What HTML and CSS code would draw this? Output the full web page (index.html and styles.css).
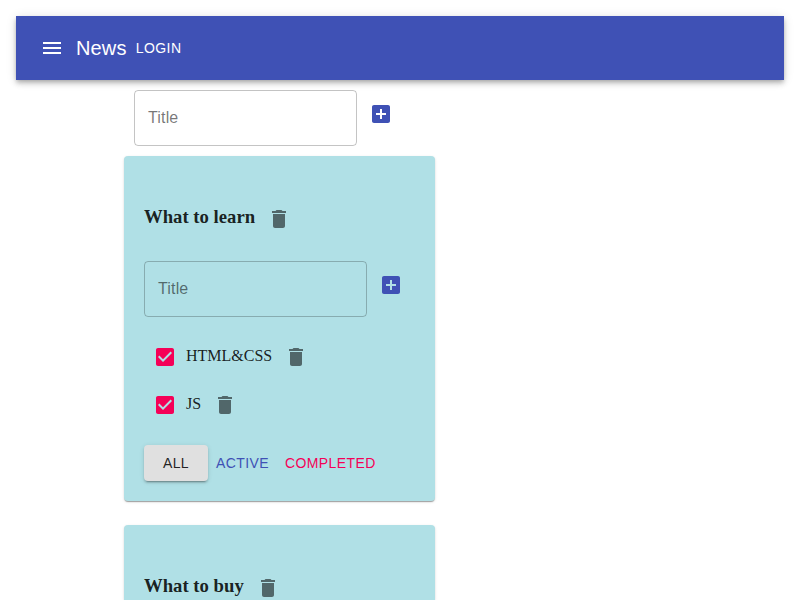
FILE: index.html
```html
<!DOCTYPE html>
<html lang="en">
<head>
<meta charset="utf-8">
<title>Todolists</title>
<link rel="stylesheet" href="styles.css">
</head>
<body>
<svg width="0" height="0" class="defs">
  <symbol id="menu" viewBox="0 0 24 24"><path d="M3 18h18v-2H3v2zm0-5h18v-2H3v2zm0-7v2h18V6H3z"/></symbol>
  <symbol id="add" viewBox="0 0 24 24"><path d="M19 3H5c-1.11 0-2 .9-2 2v14c0 1.1.89 2 2 2h14c1.1 0 2-.9 2-2V5c0-1.100-.9-2-2-2zm-2 10h-4v4h-2v-4H7v-2h4V7h2v4h4v2z"/></symbol>
  <symbol id="delete" viewBox="0 0 24 24"><path d="M6 19c0 1.100.9 2 2 2h8c1.100 0 2-.9 2-2V7H6v12zM19 4h-3.500l-1-1h-5l-1 1H5v2h14V4z"/></symbol>
  <symbol id="checked" viewBox="0 0 24 24"><path d="M19 3H5c-1.110 0-2 .9-2 2v14c0 1.100.89 2 2 2h14c1.110 0 2-.9 2-2V5c0-1.100-.89-2-2-2zm-9 14l-5-5 1.410-1.410L10 14.170l7.590-7.590L19 8l-9 9z"/></symbol>
</svg>
<header class="appbar">
  <a class="icon-button menu"><svg><use href="#menu"/></svg></a>
  <div class="brand">News</div>
  <a class="button">Login</a>
</header>
<main class="container">
  <div class="add-form new-list">
    <div class="field">Title</div>
    <a class="icon-button primary"><svg><use href="#add"/></svg></a>
  </div>
  <section class="card">
    <h3 class="heading"><span>What to learn</span><a class="icon-button"><svg><use href="#delete"/></svg></a></h3>
    <div class="add-form">
      <div class="field">Title</div>
      <a class="icon-button primary"><svg><use href="#add"/></svg></a>
    </div>
    <div class="tasks">
      <div class="task"><a class="checkbox"><svg><use href="#checked"/></svg></a><span>HTML&amp;CSS</span><a class="icon-button"><svg><use href="#delete"/></svg></a></div>
      <div class="task"><a class="checkbox"><svg><use href="#checked"/></svg></a><span>JS</span><a class="icon-button"><svg><use href="#delete"/></svg></a></div>
    </div>
    <div class="filters">
      <a class="button contained">All</a>
      <a class="button primary">Active</a>
      <a class="button secondary">Completed</a>
    </div>
  </section>
  <section class="card last">
    <h3 class="heading"><span>What to buy</span><a class="icon-button"><svg><use href="#delete"/></svg></a></h3>
  </section>
</main>
</body>
</html>
```
FILE: styles.css
```css
* { box-sizing: border-box; }
body {
  height: 600px;
  margin: 0;
  padding: 16px 16px 0;
  overflow: hidden;
  background: #fff;
  color: #000;
  font-family: "Liberation Serif", "Times New Roman", serif;
  font-size: 16px;
}
.defs { display: none; }
svg { display: block; width: 24px; height: 24px; fill: currentColor; }
.appbar {
  display: flex;
  align-items: center;
  height: 64px;
  padding: 0 24px;
  background: #3f51b5;
  color: #fff;
  box-shadow: 0 2px 4px -1px rgba(0,0,0,.2), 0 4px 5px 0 rgba(0,0,0,.14), 0 1px 10px 0 rgba(0,0,0,.12);
}
.icon-button { display: block; flex: none; padding: 12px; color: rgba(0,0,0,.54); }
.icon-button.menu { margin-left: -12px; color: #fff; }
.brand {
  font: 500 20px/32px "Liberation Sans", Arial, sans-serif;
  letter-spacing: .0075em;
}
.button {
  min-width: 64px;
  padding: 6px 8px;
  border-radius: 4px;
  font: 500 14px/24.5px "Liberation Sans", Arial, sans-serif;
  letter-spacing: .02857em;
  text-align: center;
  text-transform: uppercase;
}
.primary { color: #3f51b5; }
.secondary { color: #f50057; }
.contained {
  padding: 6px 16px;
  background: #e0e0e0;
  color: rgba(0,0,0,.87);
  box-shadow: 0 3px 1px -2px rgba(0,0,0,.2), 0 2px 2px 0 rgba(0,0,0,.14), 0 1px 5px 0 rgba(0,0,0,.12);
}
.container {
  display: flex;
  flex-direction: column;
  width: 311px;
  height: 520px;
  margin-left: 108px;
}
.add-form { display: flex; align-items: flex-start; }
.new-list { padding: 10px; }
.field {
  flex: none;
  width: 223px;
  height: 56px;
  padding: 0 13px;
  border: 1px solid rgba(0,0,0,.23);
  border-radius: 4px;
  color: rgba(0,0,0,.54);
  font: 16px/54px "Liberation Sans", Arial, sans-serif;
  letter-spacing: .00938em;
}
.card {
  flex: none;
  height: 345px;
  margin-bottom: 24px;
  padding: 39px 20px 20px;
  border-radius: 4px;
  background: #b0e0e6;
  color: rgba(0,0,0,.87);
  box-shadow: 0 2px 1px -1px rgba(0,0,0,.2), 0 1px 1px 0 rgba(0,0,0,.14), 0 1px 3px 0 rgba(0,0,0,.12);
}
.last {
  flex: 1;
  height: auto;
  min-height: 0;
  margin-bottom: 0;
  padding-bottom: 0;
  border-radius: 4px 4px 0 0;
  overflow: hidden;
}
.heading {
  display: flex;
  align-items: center;
  height: 48px;
  margin: 0 0 18px;
  font-size: 18.72px;
  line-height: 22px;
}
.heading span { padding-bottom: 4px; }
.tasks { padding: 16px 0; }
.task { display: flex; align-items: center; height: 48px; line-height: 18px; }
.task span { padding-bottom: 2px; }
.checkbox { display: block; padding: 9px; color: #f50057; }
.filters { display: flex; height: 36px; }
```
